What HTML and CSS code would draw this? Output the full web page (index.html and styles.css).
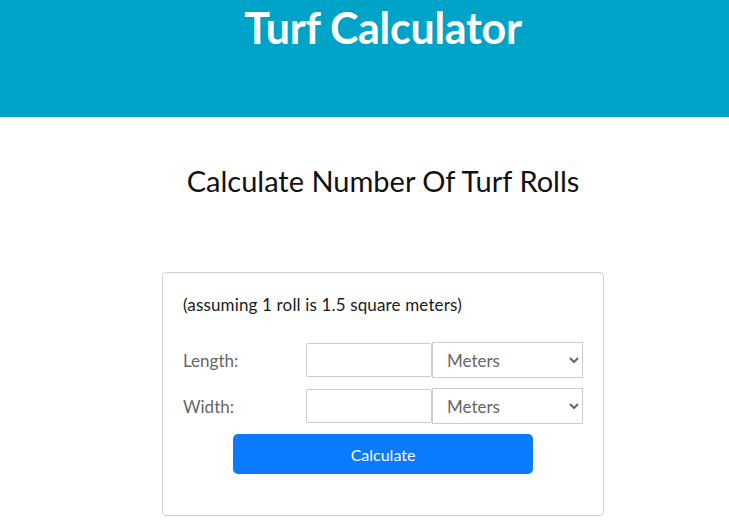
FILE: index.html
```html
<!DOCTYPE html>
<html lang="en">
<head>
    <meta charset="UTF-8">
    <meta name="viewport" content="width=device-width, initial-scale=1.0">
    <title>Turf Calculator</title>
    <link rel="stylesheet" href="styles.css">
</head>
<body>
    <div class="page">
        <header class="banner">
            <h1>Turf Calculator</h1>
        </header>

        <main class="content">
            <h2 class="heading">Calculate Number Of Turf Rolls</h2>

            <form class="calc-card" onsubmit="return false;">
                <p class="note">(assuming 1 roll is 1.5 square meters)</p>

                <div class="field-row">
                    <label for="length">Length:</label>
                    <input type="text" id="length">
                    <select id="lengthUnit">
                        <option>Meters</option>
                        <option>Feet</option>
                        <option>Yards</option>
                    </select>
                </div>

                <div class="field-row">
                    <label for="width">Width:</label>
                    <input type="text" id="width">
                    <select id="widthUnit">
                        <option>Meters</option>
                        <option>Feet</option>
                        <option>Yards</option>
                    </select>
                </div>

                <div class="actions">
                    <button type="submit" class="btn-calc">Calculate</button>
                </div>
            </form>
        </main>
    </div>
</body>
</html>
```

FILE: styles.css
```css
* {
    margin: 0;
    padding: 0;
    box-sizing: border-box;
}

body {
    font-family: Lato, "Open Sans", sans-serif;
    background: #ffffff;
    color: #111111;
}

/* the page content sits slightly right of the window centre */
.page {
    padding-left: 37px;
}

.banner {
    background: #00a3c8;
    height: 117px;
    margin-left: -37px;
    padding-left: 37px;
    text-align: center;
}

.banner h1 {
    color: #ffffff;
    font-size: 43px;
    font-weight: 700;
    line-height: 56px;
    letter-spacing: -0.3px;
}

.content {
    padding-top: 46px;
}

.heading {
    text-align: center;
    font-size: 29px;
    font-weight: 400;
    line-height: 36px;
    color: #111111;
}

.calc-card {
    width: 442px;
    margin: 73px auto 0;
    border: 1px solid #d0d0d0;
    border-radius: 4px;
    padding: 20px 20px 41px;
}

.note {
    font-size: 17px;
    line-height: 24px;
    letter-spacing: 0.15px;
    color: #1a1a1a;
    margin-bottom: 25px;
}

.field-row {
    display: flex;
    align-items: center;
    margin-bottom: 10px;
}

.field-row label {
    width: 123px;
    font-size: 17px;
    color: #666666;
}

.field-row input {
    width: 126px;
    height: 34px;
    border: 1px solid #cccccc;
    border-radius: 2px;
    padding: 0 8px;
    font-size: 16px;
}

.field-row select {
    width: 151px;
    height: 36px;
    border: 1px solid #cccccc;
    background: #ffffff;
    color: #666666;
    font-family: inherit;
    font-size: 17px;
    padding: 0 10px;
}

.actions {
    display: flex;
    justify-content: center;
}

.btn-calc {
    width: 300px;
    height: 40px;
    border: none;
    border-radius: 5px;
    background: #0a7bff;
    color: #ffffff;
    font-family: inherit;
    font-size: 16px;
    cursor: pointer;
}
```
